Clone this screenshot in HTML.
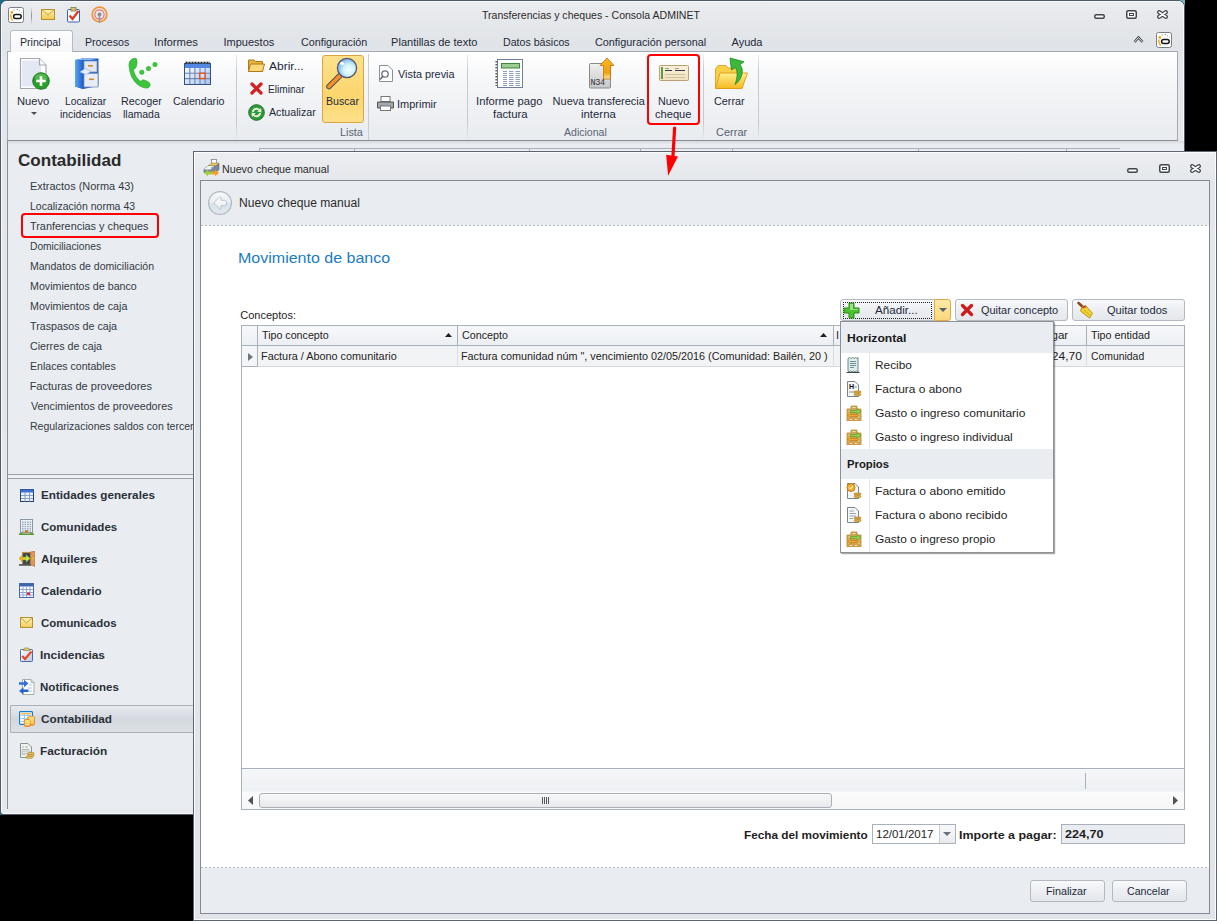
<!DOCTYPE html>
<html><head><meta charset="utf-8"><title>Nuevo cheque manual</title>
<style>
html,body{margin:0;padding:0;}
body{width:1217px;height:921px;overflow:hidden;position:relative;background:#000;font-family:"Liberation Sans",sans-serif;}
.a{position:absolute;box-sizing:border-box;}
.t{position:absolute;white-space:pre;transform-origin:0 0;font-family:"Liberation Sans",sans-serif;}
</style></head><body>
<div class="a" style="left:0px;top:0px;width:10px;height:10px;background:#1d6f86;"></div>
<div class="a" style="left:1176px;top:0px;width:9px;height:10px;background:#6fb6c8;"></div>
<div class="a" style="left:0px;top:806px;width:10px;height:9px;background:#1d6f86;"></div>
<div class="a" style="left:0px;top:0px;width:1185px;height:815px;border:1px solid #505a68;border-radius:7px 7px 4px 4px;background:linear-gradient(#eaecef,#e0e3e7 45px,#e3e6ea 60px,#e6e9ec);"></div>
<div class="a" style="left:1px;top:1px;width:1183px;height:813px;border:1px solid #f8f9fb;border-radius:6px 6px 3px 3px;"></div>
<div class="t" style="left:481.76px;top:10px;font-size:11px;line-height:11px;color:#2b2b2b;transform:scaleX(0.9572);">Transferencias y cheques - Consola ADMINET</div>
<svg class="a" style="left:1094px;top:14px;" width="11" height="5" viewBox="0 0 11 5"><rect x="0.75" y="0.75" width="9.5" height="3.5" rx="1.5" fill="#fff" stroke="#41464d" stroke-width="1.5"/></svg>
<svg class="a" style="left:1126px;top:10px;" width="11" height="9" viewBox="0 0 11 9"><rect x="0.75" y="0.75" width="9.5" height="7.5" rx="1.5" fill="#fff" stroke="#41464d" stroke-width="1.5"/><rect x="3.5" y="3.5" width="4" height="2" fill="#fff" stroke="#41464d" stroke-width="1"/></svg>
<svg class="a" style="left:1157px;top:10px;" width="11" height="9" viewBox="0 0 11 9"><path d="M2.2,2.2 L8.8,6.8 M8.8,2.2 L2.2,6.8" stroke="#41464d" stroke-width="4.2" stroke-linecap="round"/><path d="M2.2,2.2 L8.8,6.8 M8.8,2.2 L2.2,6.8" stroke="#fff" stroke-width="1.8" stroke-linecap="round"/></svg>
<svg class="a" style="left:8px;top:7px;" width="16" height="16" viewBox="0 0 16 16"><rect x="0.5" y="0.5" width="15" height="15" rx="2" fill="#fff" stroke="#7c7f84"/><circle cx="3.8" cy="5.4" r="1.3" fill="#f0a010"/><path d="M2.8,7.5 C2.6,10 3.2,12 4.6,13.6" stroke="#f2aa20" stroke-width="1.5" fill="none"/><rect x="5.6" y="7.6" width="7.6" height="4" rx="2" fill="none" stroke="#161616" stroke-width="1.5"/><circle cx="6.1" cy="3" r="0.6" fill="#777"/><circle cx="9.3" cy="2.4" r="0.6" fill="#777"/><circle cx="11.6" cy="3.7" r="0.5" fill="#888"/><circle cx="13.4" cy="5.4" r="0.45" fill="#999"/></svg>
<div class="a" style="left:31px;top:7px;width:1px;height:18px;background:linear-gradient(#e4e7eb,#8a9099,#e4e7eb);"></div>
<svg class="a" style="left:41px;top:9px;" width="14" height="11" viewBox="0 0 14 11"><defs><linearGradient id="mg" x1="0" y1="0" x2="0" y2="1"><stop offset="0" stop-color="#fff3b8"/><stop offset="1" stop-color="#f0c850"/></linearGradient></defs><rect x="0.5" y="0.5" width="13" height="10" fill="url(#mg)" stroke="#b8902a"/><path d="M0.5,0.5 L7,6 L13.5,0.5" fill="none" stroke="#c8a040"/></svg>
<svg class="a" style="left:66px;top:7px;" width="15" height="16" viewBox="0 0 15 16"><rect x="1.5" y="2.5" width="12" height="12.5" rx="1" fill="#f4f8ff" stroke="#3a62b0"/><rect x="5" y="0.5" width="5" height="3.5" fill="#d8c070" stroke="#8a7a40" stroke-width="0.8"/><path d="M3.5,8.5 L6.5,12 L12.5,4" stroke="#e03a20" stroke-width="2.2" fill="none"/></svg>
<svg class="a" style="left:91px;top:6px;" width="17" height="17" viewBox="0 0 17 17"><circle cx="8.5" cy="8.5" r="7.3" fill="none" stroke="#f5943a" stroke-width="1.8"/><circle cx="8.5" cy="8.5" r="4.6" fill="none" stroke="#e86a6a" stroke-width="1.1"/><circle cx="8.5" cy="8.5" r="2" fill="#888"/><rect x="7.7" y="9" width="1.6" height="8" fill="#9a9a9a"/></svg>
<div class="a" style="left:10px;top:30px;width:63px;height:22px;background:linear-gradient(#fdfdfe,#f6f7f9);border:1px solid #b5bcc5;border-bottom:none;border-radius:3px 3px 0 0;z-index:2;"></div>
<div class="t" style="left:20.16px;top:37px;font-size:11px;line-height:11px;color:#1e2a3a;transform:scaleX(0.9600);z-index:3;">Principal</div>
<div class="t" style="left:85.16px;top:37px;font-size:11px;line-height:11px;color:#1e2a3a;transform:scaleX(0.9636);z-index:3;">Procesos</div>
<div class="t" style="left:154.47px;top:37px;font-size:11px;line-height:11px;color:#1e2a3a;transform:scaleX(1.0272);z-index:3;">Informes</div>
<div class="t" style="left:223.50px;top:37px;font-size:11px;line-height:11px;color:#1e2a3a;z-index:3;">Impuestos</div>
<div class="t" style="left:300.51px;top:37px;font-size:11px;line-height:11px;color:#1e2a3a;transform:scaleX(0.9756);z-index:3;">Configuración</div>
<div class="t" style="left:391.12px;top:37px;font-size:11px;line-height:11px;color:#1e2a3a;z-index:3;">Plantillas de texto</div>
<div class="t" style="left:502.66px;top:37px;font-size:11px;line-height:11px;color:#1e2a3a;transform:scaleX(0.9650);z-index:3;">Datos básicos</div>
<div class="t" style="left:595.01px;top:37px;font-size:11px;line-height:11px;color:#1e2a3a;transform:scaleX(0.9832);z-index:3;">Configuración personal</div>
<div class="t" style="left:731.50px;top:37px;font-size:11px;line-height:11px;color:#1e2a3a;z-index:3;">Ayuda</div>
<svg class="a" style="left:1133px;top:35px;" width="11" height="9" viewBox="0 0 11 9"><path d="M1.5,7 L5.5,2.5 L9.5,7" fill="none" stroke="#3a3f46" stroke-width="2.6" stroke-linejoin="round"/><path d="M1.5,7 L5.5,2.5 L9.5,7" fill="none" stroke="#fff" stroke-width="0.9"/></svg>
<svg class="a" style="left:1156px;top:32px;" width="16" height="16" viewBox="0 0 16 16"><rect x="0.5" y="0.5" width="15" height="15" rx="2" fill="#fff" stroke="#7c7f84"/><circle cx="3.8" cy="5.4" r="1.3" fill="#f0a010"/><path d="M2.8,7.5 C2.6,10 3.2,12 4.6,13.6" stroke="#f2aa20" stroke-width="1.5" fill="none"/><rect x="5.6" y="7.6" width="7.6" height="4" rx="2" fill="none" stroke="#161616" stroke-width="1.5"/><circle cx="6.1" cy="3" r="0.6" fill="#777"/><circle cx="9.3" cy="2.4" r="0.6" fill="#777"/><circle cx="11.6" cy="3.7" r="0.5" fill="#888"/><circle cx="13.4" cy="5.4" r="0.45" fill="#999"/></svg>
<div class="a" style="left:7px;top:51px;width:1171px;height:90px;background:linear-gradient(#ffffff,#f5f6f8 35%,#e8ebef);border:1px solid #a3aab3;border-bottom:1px solid #878e97;z-index:1;"></div>
<div class="a" style="left:8px;top:141px;width:1176px;height:3px;background:linear-gradient(#d6dade,#e6e9ec);z-index:2;"></div>
<div class="a" style="left:236px;top:54px;width:1px;height:86px;background:linear-gradient(#eef0f3,#c5cad1 20%,#c5cad1 80%,#e8ebef);z-index:2;"></div>
<div class="a" style="left:368px;top:54px;width:1px;height:86px;background:#c8cdd4;z-index:2;"></div>
<div class="a" style="left:466.5px;top:54px;width:1px;height:86px;background:linear-gradient(#eef0f3,#c5cad1 20%,#c5cad1 80%,#e8ebef);z-index:2;"></div>
<div class="a" style="left:703px;top:54px;width:1px;height:86px;background:linear-gradient(#eef0f3,#c5cad1 20%,#c5cad1 80%,#e8ebef);z-index:2;"></div>
<div class="a" style="left:758px;top:54px;width:1px;height:86px;background:linear-gradient(#eef0f3,#c5cad1 20%,#c5cad1 80%,#e8ebef);z-index:2;"></div>
<svg class="a" style="left:19px;top:57px;z-index:3;" width="33" height="33" viewBox="0 0 33 33"><path d="M1.5,1.5 H20.5 L27,8 V31.5 H1.5 Z" fill="#fff" stroke="#a4a8ae" stroke-width="1.2"/><rect x="3" y="3.5" width="19" height="26" fill="#e4e8f4"/><path d="M20.5,1.5 V8 H27" fill="#fafafa" stroke="#a4a8ae" stroke-width="1.2"/><circle cx="22" cy="24" r="8.3" fill="#2a9e2a" stroke="#17731a" stroke-width="0.9"/><ellipse cx="22" cy="20.5" rx="6" ry="4" fill="#7fd47f" opacity="0.45"/><path d="M22,19.2 V28.8 M17.2,24 H26.8" stroke="#fff" stroke-width="2.6"/></svg>
<div class="t" style="left:16.61px;top:96px;font-size:11px;line-height:11px;color:#1e2a3a;transform:scaleX(1.0164);z-index:3;">Nuevo</div>
<svg class="a" style="left:31px;top:112px;z-index:3;" width="6" height="3" viewBox="0 0 6 3"><path d="M0,0 H6 L3,3 Z" fill="#4a4f57"/></svg>
<svg class="a" style="left:74px;top:57px;z-index:3;" width="26" height="33" viewBox="0 0 26 33"><defs><linearGradient id="cab" x1="0" y1="0" x2="1" y2="0"><stop offset="0" stop-color="#5aa8f4"/><stop offset="1" stop-color="#1f5fc8"/></linearGradient></defs><path d="M1,3 L9,1.5 H24.5 V29 L9,32 L1,29.5 Z" fill="#1e5ac4"/><path d="M1,3 L9,1.5 V32 L1,29.5 Z" fill="url(#cab)"/><path d="M1,3 L9,1.5 H24.5 L17,3 Z" fill="#7ab8f0"/><rect x="10" y="4" width="13" height="11" fill="#e2e8f3" stroke="#7f94b8" stroke-width="0.8"/><rect x="10" y="16.5" width="14" height="13.5" fill="#e8edf6" stroke="#7f94b8" stroke-width="0.8"/><rect x="14" y="8" width="5" height="1.6" fill="#d08a28"/><rect x="15" y="21.5" width="5" height="1.6" fill="#d08a28"/><path d="M6,15 L11,11.5 L17,14.5 L12,17.5 Z" fill="#e6eef8" stroke="#9ab0cc" stroke-width="0.6"/></svg>
<div class="t" style="left:64.88px;top:96px;font-size:11px;line-height:11px;color:#1e2a3a;transform:scaleX(0.9372);z-index:3;">Localizar</div>
<div class="t" style="left:60.30px;top:109px;font-size:11px;line-height:11px;color:#1e2a3a;transform:scaleX(0.9390);z-index:3;">incidencias</div>
<svg class="a" style="left:127px;top:57px;z-index:3;" width="31" height="33" viewBox="0 0 31 33"><path d="M2,8 C2,4 4.5,1.5 7.5,1.2 L9.5,1.8 C10.5,5 10.2,9 8.2,11.5 L6.5,12 C6.8,17 10,22 14,24.5 L15.5,22.8 C18.5,23.2 21,24.5 23,26.5 C23.6,29 22,31.5 18.5,31 C9,29.5 2.5,20 2,8 Z" fill="#3cc43c" stroke="#2ea82e" stroke-width="0.7"/><circle cx="14.8" cy="15.3" r="2.5" fill="#3cc43c"/><circle cx="21.5" cy="11.5" r="2.5" fill="#3cc43c"/><circle cx="28" cy="7.5" r="2.5" fill="#3cc43c"/></svg>
<div class="t" style="left:121.14px;top:96px;font-size:11px;line-height:11px;color:#1e2a3a;transform:scaleX(0.9802);z-index:3;">Recoger</div>
<div class="t" style="left:123.28px;top:109px;font-size:11px;line-height:11px;color:#1e2a3a;transform:scaleX(0.9536);z-index:3;">llamada</div>
<svg class="a" style="left:184px;top:61px;z-index:3;" width="27" height="24" viewBox="0 0 27 24"><defs><linearGradient id="calg" x1="0" y1="0" x2="1" y2="1"><stop offset="0" stop-color="#ffffff"/><stop offset="1" stop-color="#a8c4f0"/></linearGradient></defs><rect x="0.5" y="2.5" width="26" height="21" fill="url(#calg)" stroke="#34507c"/><rect x="1" y="3" width="25" height="4" fill="#5288e4"/><path d="M5.8,7 V23 M10.9,7 V23 M16,7 V23 M21.1,7 V23 M1,12.3 H26 M1,17.6 H26" stroke="#6e88b4" stroke-width="1.1"/><rect x="15.8" y="12.2" width="5.2" height="5.3" fill="#cfe6fa" stroke="#e8501a" stroke-width="1.4"/><path d="M1.5,1.5 H26" stroke="#1e1e1e" stroke-width="1.6" stroke-dasharray="2,1"/></svg>
<div class="t" style="left:173.02px;top:96px;font-size:11px;line-height:11px;color:#1e2a3a;transform:scaleX(0.9665);z-index:3;">Calendario</div>
<svg class="a" style="left:248px;top:58px;z-index:3;" width="17" height="14" viewBox="0 0 17 14"><path d="M0.5,2 H6 L7.5,3.5 H14.5 V13.5 H0.5 Z" fill="#e8b440" stroke="#b07818"/><path d="M2.5,6 H16.5 L14.5,13.5 H0.5 Z" fill="#f8d878" stroke="#b07818"/></svg>
<div class="t" style="left:268.50px;top:61px;font-size:11px;line-height:11px;color:#1e2a3a;transform:scaleX(1.0894);z-index:3;">Abrir...</div>
<svg class="a" style="left:250px;top:82px;z-index:3;" width="13" height="13" viewBox="0 0 13 13"><path d="M2,2 L11,11 M11,2 L2,11" stroke="#d42020" stroke-width="3.2" stroke-linecap="round"/></svg>
<div class="t" style="left:267.70px;top:84px;font-size:11px;line-height:11px;color:#1e2a3a;transform:scaleX(0.9191);z-index:3;">Eliminar</div>
<svg class="a" style="left:248px;top:104px;z-index:3;" width="17" height="17" viewBox="0 0 17 17"><circle cx="8.5" cy="8.5" r="7.8" fill="#2f9a3a" stroke="#1f6e28"/><path d="M4,8 A4.5,4.5 0 0 1 12,5.5 L13,3.5 L13.5,8.5 L9,7.5 L10.8,6.6 A3,3 0 0 0 5.8,8 Z M13,9 A4.5,4.5 0 0 1 5,11.5 L4,13.5 L3.5,8.5 L8,9.5 L6.2,10.4 A3,3 0 0 0 11.2,9 Z" fill="#e6f6d8"/></svg>
<div class="t" style="left:268.50px;top:107px;font-size:11px;line-height:11px;color:#1e2a3a;transform:scaleX(0.9662);z-index:3;">Actualizar</div>
<div class="a" style="left:322px;top:55px;width:42px;height:68px;background:linear-gradient(#fde28c,#fdd873 45%,#fcd66e 60%,#fde08a);border:1px solid #dca443;border-radius:3px;z-index:2;"></div>
<svg class="a" style="left:326px;top:57px;z-index:3;" width="33" height="33" viewBox="0 0 33 33"><defs><radialGradient id="lens" cx="0.6" cy="0.6" r="0.6"><stop offset="0" stop-color="#f4feff"/><stop offset="0.5" stop-color="#cdf2fa"/><stop offset="1" stop-color="#7fb0e6"/></radialGradient></defs><path d="M3,29.5 L13.5,19" stroke="#4a4a60" stroke-width="5.6" stroke-linecap="round"/><path d="M3,29.5 L13.5,19" stroke="#f39028" stroke-width="3.8" stroke-linecap="round"/><circle cx="21" cy="11" r="9.6" fill="url(#lens)" stroke="#55557a" stroke-width="1.3"/><ellipse cx="16" cy="6.5" rx="2" ry="1.4" fill="#fff"/></svg>
<div class="t" style="left:325.65px;top:96px;font-size:11px;line-height:11px;color:#1e2a3a;transform:scaleX(0.9660);z-index:3;">Buscar</div>
<div class="t" style="left:340.14px;top:127px;font-size:11px;line-height:11px;color:#5a6470;transform:scaleX(0.9832);z-index:3;">Lista</div>
<svg class="a" style="left:378px;top:65px;z-index:3;" width="16" height="17" viewBox="0 0 16 17"><path d="M1.5,0.5 H10 L14.5,5 V16.5 H1.5 Z" fill="#fff" stroke="#8a9099"/><circle cx="7" cy="9" r="3.2" fill="none" stroke="#6a7480" stroke-width="1.3"/><line x1="4.6" y1="11.6" x2="2" y2="14.5" stroke="#6a7480" stroke-width="1.6"/></svg>
<div class="t" style="left:398.00px;top:69px;font-size:11px;line-height:11px;color:#1e2a3a;transform:scaleX(0.9869);z-index:3;">Vista previa</div>
<svg class="a" style="left:377px;top:96px;z-index:3;" width="17" height="15" viewBox="0 0 17 15"><rect x="4" y="0.5" width="9" height="5" fill="#fff" stroke="#777"/><path d="M0.5,6 H16.5 V12 H0.5 Z" fill="#a0a8b0" stroke="#555"/><rect x="3.5" y="10" width="10" height="4.5" fill="#fff" stroke="#777"/></svg>
<div class="t" style="left:397.00px;top:99px;font-size:11px;line-height:11px;color:#1e2a3a;z-index:3;">Imprimir</div>
<svg class="a" style="left:494px;top:58px;z-index:3;" width="30" height="31" viewBox="0 0 30 31"><rect x="3.5" y="1.5" width="25" height="28" fill="#fff" stroke="#6e7f98"/><rect x="7.5" y="5.5" width="18" height="4.5" fill="#9ccc94" stroke="#3a8a3a"/><path d="M9,13.5 H13 M15,13.5 H19.5 M21.5,13.5 H26" stroke="#8aa0bc" stroke-width="1"/><path d="M9,15.5 H13 M15,15.5 H19.5 M21.5,15.5 H26" stroke="#8aa0bc" stroke-width="1"/><path d="M9,17.5 H13 M15,17.5 H19.5 M21.5,17.5 H26" stroke="#8aa0bc" stroke-width="1"/><path d="M9,19.5 H13 M15,19.5 H19.5 M21.5,19.5 H26" stroke="#8aa0bc" stroke-width="1"/><path d="M9,21.5 H13 M15,21.5 H19.5 M21.5,21.5 H26" stroke="#8aa0bc" stroke-width="1"/><path d="M9,23.5 H13 M15,23.5 H19.5 M21.5,23.5 H26" stroke="#8aa0bc" stroke-width="1"/><path d="M9,25.5 H13 M15,25.5 H19.5 M21.5,25.5 H26" stroke="#8aa0bc" stroke-width="1"/><path d="M9,27.5 H13 M15,27.5 H19.5 M21.5,27.5 H26" stroke="#8aa0bc" stroke-width="1"/><path d="M2.5,3 V28" stroke="#666" stroke-width="2.2" stroke-dasharray="1.4,1.6"/></svg>
<div class="t" style="left:476.47px;top:96px;font-size:11px;line-height:11px;color:#1e2a3a;transform:scaleX(1.0256);z-index:3;">Informe pago</div>
<div class="t" style="left:492.87px;top:109px;font-size:11px;line-height:11px;color:#1e2a3a;transform:scaleX(1.0299);z-index:3;">factura</div>
<svg class="a" style="left:588px;top:57px;z-index:3;" width="28" height="32" viewBox="0 0 28 32"><defs><linearGradient id="n34" x1="0" y1="0" x2="0" y2="1"><stop offset="0" stop-color="#f0f0f0"/><stop offset="1" stop-color="#c8c8c8"/></linearGradient><linearGradient id="arr" x1="0" y1="0" x2="0" y2="1"><stop offset="0" stop-color="#f8b820"/><stop offset="0.7" stop-color="#f0a010"/><stop offset="1" stop-color="#f8e8a0"/></linearGradient></defs><rect x="1.5" y="6.5" width="21" height="24.5" rx="1" fill="url(#n34)" stroke="#8a8a8a"/><text x="2.5" y="28" font-family="Liberation Mono" font-size="8.5" fill="#333" letter-spacing="-0.3">N34</text><path d="M19,1 L26,8.5 H22.5 V22 H15.5 V8.5 H12 Z" fill="url(#arr)" stroke="#c07010" stroke-width="0.8"/></svg>
<div class="t" style="left:552.62px;top:96px;font-size:11px;line-height:11px;color:#1e2a3a;z-index:3;">Nueva transferecia</div>
<div class="t" style="left:581.22px;top:109px;font-size:11px;line-height:11px;color:#1e2a3a;transform:scaleX(1.0342);z-index:3;">interna</div>
<div class="t" style="left:564.00px;top:127px;font-size:11px;line-height:11px;color:#5a6470;transform:scaleX(0.9573);z-index:3;">Adicional</div>
<svg class="a" style="left:659px;top:65px;z-index:3;" width="30" height="16" viewBox="0 0 30 16"><defs><linearGradient id="chq" x1="0" y1="0" x2="0" y2="1"><stop offset="0" stop-color="#fbf1da"/><stop offset="1" stop-color="#f2e2bc"/></linearGradient></defs><rect x="0.5" y="0.5" width="29" height="15" rx="1" fill="url(#chq)" stroke="#b8a070"/><rect x="2" y="2" width="2" height="12" fill="#5a9a4a"/><path d="M6,3.5 H10 M16,3.5 H20" stroke="#9a9488" stroke-width="0.9"/><path d="M6,5.5 H13 M16,5.5 H26" stroke="#3a3a4a" stroke-width="1.1"/><path d="M6,9.5 H26 M6,12.5 H26" stroke="#c8bca0" stroke-width="0.9"/></svg>
<div class="t" style="left:658.14px;top:96px;font-size:11px;line-height:11px;color:#1e2a3a;transform:scaleX(0.9836);z-index:3;">Nuevo</div>
<div class="t" style="left:655.49px;top:109px;font-size:11px;line-height:11px;color:#1e2a3a;transform:scaleX(1.0107);z-index:3;">cheque</div>
<div class="a" style="left:647px;top:54px;width:53px;height:71px;border:2px solid #ff0000;border-radius:4px;z-index:4;"></div>
<svg class="a" style="left:714px;top:57px;z-index:3;" width="34" height="33" viewBox="0 0 34 33"><defs><linearGradient id="fld" x1="0" y1="0" x2="0" y2="1"><stop offset="0" stop-color="#fff090"/><stop offset="1" stop-color="#f6b820"/></linearGradient></defs><path d="M1.5,12 L4,8.5 H12 L14,11 H28 V31.5 H1.5 Z" fill="#f8d048" stroke="#e0a020" stroke-width="0.9"/><path d="M6,16 H33.5 L28,31.5 H1.5 Z" fill="url(#fld)" stroke="#e09a18" stroke-width="0.9"/><path d="M16,1 L30,4.8 L26,7.5 C30,13.5 28.5,22 21,27.5 C24,20 23.5,13.5 21.5,10.5 L17.5,13 Z" fill="#3cb83c" stroke="#1e8a1e" stroke-width="0.8"/></svg>
<div class="t" style="left:714.01px;top:96px;font-size:11px;line-height:11px;color:#1e2a3a;transform:scaleX(0.9836);z-index:3;">Cerrar</div>
<div class="t" style="left:716.00px;top:127px;font-size:11px;line-height:11px;color:#5a6470;z-index:3;">Cerrar</div>
<svg class="a" style="left:660px;top:126px;z-index:20;" width="24" height="52" viewBox="0 0 24 52"><path d="M14.6,2 L13,30" stroke="#ff0000" stroke-width="3.2" stroke-linecap="round"/><path d="M6.2,28.8 L18,30.4 L8.1,49.7 Z" fill="#ff0000"/></svg>
<div class="a" style="left:7px;top:141px;width:187px;height:668px;background:#e9ecf0;border-left:1px solid #8a9099;"></div>
<div class="a" style="left:8px;top:141px;width:186px;height:3px;background:linear-gradient(#d4d8dd,#e9ecf0);"></div>
<div class="a" style="left:194px;top:141px;width:990px;height:667px;background:#e9ecf0;"></div>
<div class="a" style="left:259px;top:148px;width:861px;height:4px;background:linear-gradient(#eceef2,#e6e9ed);border:1px solid #a8b0ba;border-bottom:none;border-right:none;"></div>
<div class="a" style="left:354px;top:148px;width:1px;height:4px;background:#a8b0ba;"></div>
<div class="a" style="left:529px;top:148px;width:1px;height:4px;background:#a8b0ba;"></div>
<div class="a" style="left:640px;top:148px;width:1px;height:4px;background:#a8b0ba;"></div>
<div class="a" style="left:732px;top:148px;width:1px;height:4px;background:#a8b0ba;"></div>
<div class="a" style="left:918px;top:148px;width:1px;height:4px;background:#a8b0ba;"></div>
<div class="a" style="left:1066px;top:148px;width:1px;height:4px;background:#a8b0ba;"></div>
<div class="t" style="left:18.07px;top:152px;font-size:17px;line-height:17px;font-weight:700;color:#2a2a2a;transform:scaleX(1.0035);">Contabilidad</div>
<div class="t" style="left:29.63px;top:181px;font-size:11px;line-height:11px;color:#333a44;transform:scaleX(0.9951);">Extractos (Norma 43)</div>
<div class="t" style="left:29.66px;top:201px;font-size:11px;line-height:11px;color:#333a44;transform:scaleX(0.9545);">Localización norma 43</div>
<div class="t" style="left:30.25px;top:221px;font-size:11px;line-height:11px;color:#333a44;transform:scaleX(0.9876);">Tranferencias y cheques</div>
<div class="t" style="left:29.69px;top:241px;font-size:11px;line-height:11px;color:#333a44;transform:scaleX(0.9291);">Domiciliaciones</div>
<div class="t" style="left:29.66px;top:261px;font-size:11px;line-height:11px;color:#333a44;transform:scaleX(0.9570);">Mandatos de domiciliación</div>
<div class="t" style="left:29.65px;top:281px;font-size:11px;line-height:11px;color:#333a44;transform:scaleX(0.9701);">Movimientos de banco</div>
<div class="t" style="left:29.65px;top:301px;font-size:11px;line-height:11px;color:#333a44;transform:scaleX(0.9711);">Movimientos de caja</div>
<div class="t" style="left:30.26px;top:321px;font-size:11px;line-height:11px;color:#333a44;transform:scaleX(0.9725);">Traspasos de caja</div>
<div class="t" style="left:30.01px;top:341px;font-size:11px;line-height:11px;color:#333a44;transform:scaleX(0.9728);">Cierres de caja</div>
<div class="t" style="left:29.66px;top:361px;font-size:11px;line-height:11px;color:#333a44;transform:scaleX(0.9602);">Enlaces contables</div>
<div class="t" style="left:29.63px;top:381px;font-size:11px;line-height:11px;color:#333a44;">Facturas de proveedores</div>
<div class="t" style="left:30.50px;top:401px;font-size:11px;line-height:11px;color:#333a44;transform:scaleX(0.9765);">Vencimientos de proveedores</div>
<div class="a" style="left:30px;top:417px;width:163px;height:18px;overflow:hidden;"><div class="t" style="left:-0.4px;top:4px;font-size:11px;line-height:11px;color:#333a44;transform:scaleX(0.955);">Regularizaciones saldos con terceros</div></div>
<div class="a" style="left:21px;top:213px;width:138px;height:25px;border:2px solid #ff0000;border-radius:4px;z-index:5;"></div>
<div class="a" style="left:8px;top:474px;width:186px;height:5px;border-top:1px solid #9aa1aa;border-bottom:1px solid #9aa1aa;background:#eef0f3;"></div>
<div class="a" style="left:10px;top:705px;width:184px;height:28px;border:1px solid #a9b0b9;border-right:none;border-radius:2px 0 0 2px;background:linear-gradient(#e8ebef,#d3d8df 50%,#dde1e6);"></div>
<div class="t" style="left:41.40px;top:490px;font-size:11px;line-height:11px;font-weight:700;color:#2a3038;transform:scaleX(1.0648);">Entidades generales</div>
<div class="t" style="left:40.68px;top:522px;font-size:11px;line-height:11px;font-weight:700;color:#2a3038;transform:scaleX(1.0481);">Comunidades</div>
<div class="t" style="left:40.93px;top:554px;font-size:11px;line-height:11px;font-weight:700;color:#2a3038;transform:scaleX(1.0610);">Alquileres</div>
<div class="t" style="left:40.67px;top:586px;font-size:11px;line-height:11px;font-weight:700;color:#2a3038;transform:scaleX(1.0667);">Calendario</div>
<div class="t" style="left:40.68px;top:618px;font-size:11px;line-height:11px;font-weight:700;color:#2a3038;transform:scaleX(1.0383);">Comunicados</div>
<div class="t" style="left:40.39px;top:650px;font-size:11px;line-height:11px;font-weight:700;color:#2a3038;transform:scaleX(1.0843);">Incidencias</div>
<div class="t" style="left:40.41px;top:682px;font-size:11px;line-height:11px;font-weight:700;color:#2a3038;transform:scaleX(1.0486);">Notificaciones</div>
<div class="t" style="left:40.67px;top:714px;font-size:11px;line-height:11px;font-weight:700;color:#2a3038;transform:scaleX(1.0662);">Contabilidad</div>
<div class="t" style="left:40.39px;top:746px;font-size:11px;line-height:11px;font-weight:700;color:#2a3038;transform:scaleX(1.0776);">Facturación</div>
<svg class="a" style="left:20px;top:489px;" width="16" height="16" viewBox="0 0 16 16"><rect x="0.5" y="0.5" width="13" height="12" fill="#eaf0fa" stroke="#26406a"/><rect x="0.5" y="0.5" width="13" height="3" fill="#3f6fd0"/><path d="M1,6.5 H13 M1,9.5 H13 M5,3.5 V12.5 M9.5,3.5 V12.5" stroke="#8aa0c0"/></svg>
<svg class="a" style="left:19px;top:519px;" width="16" height="16" viewBox="0 0 16 16"><rect x="1.5" y="0.5" width="12" height="13" fill="#eef2f6" stroke="#8a96a4"/><rect x="3.0" y="2.5" width="1.6" height="1.4" fill="#98aac0"/><rect x="5.5" y="2.5" width="1.6" height="1.4" fill="#98aac0"/><rect x="8.0" y="2.5" width="1.6" height="1.4" fill="#98aac0"/><rect x="10.5" y="2.5" width="1.6" height="1.4" fill="#98aac0"/><rect x="3.0" y="4.7" width="1.6" height="1.4" fill="#98aac0"/><rect x="5.5" y="4.7" width="1.6" height="1.4" fill="#98aac0"/><rect x="8.0" y="4.7" width="1.6" height="1.4" fill="#98aac0"/><rect x="10.5" y="4.7" width="1.6" height="1.4" fill="#98aac0"/><rect x="3.0" y="6.9" width="1.6" height="1.4" fill="#98aac0"/><rect x="5.5" y="6.9" width="1.6" height="1.4" fill="#98aac0"/><rect x="8.0" y="6.9" width="1.6" height="1.4" fill="#98aac0"/><rect x="10.5" y="6.9" width="1.6" height="1.4" fill="#98aac0"/><rect x="3.0" y="9.100000000000001" width="1.6" height="1.4" fill="#98aac0"/><rect x="5.5" y="9.100000000000001" width="1.6" height="1.4" fill="#98aac0"/><rect x="8.0" y="9.100000000000001" width="1.6" height="1.4" fill="#98aac0"/><rect x="10.5" y="9.100000000000001" width="1.6" height="1.4" fill="#98aac0"/><rect x="3.0" y="11.3" width="1.6" height="1.4" fill="#98aac0"/><rect x="5.5" y="11.3" width="1.6" height="1.4" fill="#98aac0"/><rect x="8.0" y="11.3" width="1.6" height="1.4" fill="#98aac0"/><rect x="10.5" y="11.3" width="1.6" height="1.4" fill="#98aac0"/><rect x="6.3" y="11" width="2.4" height="3" fill="#c8782a"/><path d="M0,15.5 Q2.5,12 5,15.5 Z M10,15.5 Q12.5,12 15,15.5 Z" fill="#6aa83a"/><rect x="0" y="14.5" width="15" height="1.5" fill="#5a9a2a"/></svg>
<svg class="a" style="left:19px;top:551px;" width="16" height="16" viewBox="0 0 16 16"><defs><linearGradient id="alq" x1="0" y1="0" x2="1" y2="0"><stop offset="0" stop-color="#f2a020"/><stop offset="0.5" stop-color="#f6c020"/><stop offset="0.55" stop-color="#a8e040"/><stop offset="1" stop-color="#d8f060"/></linearGradient></defs><rect x="3.5" y="1.5" width="8" height="12" fill="#3c4256" stroke="#c08a48" stroke-width="1.2"/><path d="M11.5,1 L16,0 V15.5 L11.5,13.8 Z" fill="#d99a58" stroke="#a86a30" stroke-width="0.6"/><circle cx="14" cy="7.5" r="0.9" fill="#f4c420"/><rect x="0" y="13.2" width="12" height="1.5" fill="#454a52"/><path d="M0,7.5 L3.5,4 V6 H7 V3.5 L11,7.5 L7,11.5 V9 H3.5 V11 Z" fill="url(#alq)" stroke="#6a9a20" stroke-width="0.4"/></svg>
<svg class="a" style="left:19px;top:583px;" width="16" height="16" viewBox="0 0 16 16"><rect x="0.5" y="0.5" width="14" height="14" fill="#fff" stroke="#4a6aa8"/><rect x="0.5" y="0.5" width="14" height="3" fill="#3a66b0"/><path d="M1,6.5 H14 M1,9.5 H14 M1,12 H14 M4,4 V14 M7.5,4 V14 M11,4 V14" stroke="#8aa6d6"/><rect x="8" y="9.5" width="3" height="2.5" fill="#e03030"/></svg>
<svg class="a" style="left:19px;top:615px;" width="16" height="16" viewBox="0 0 16 16"><defs><linearGradient id="mg2" x1="0" y1="0" x2="0" y2="1"><stop offset="0" stop-color="#fff4c0"/><stop offset="1" stop-color="#f2cc58"/></linearGradient></defs><rect x="1.5" y="2.5" width="12" height="10" fill="url(#mg2)" stroke="#b8902a"/><path d="M1.5,2.5 L7.5,8 L13.5,2.5" fill="none" stroke="#c8a040"/></svg>
<svg class="a" style="left:19px;top:647px;" width="16" height="16" viewBox="0 0 16 16"><defs><linearGradient id="clb" x1="0" y1="0" x2="1" y2="1"><stop offset="0" stop-color="#ffffff"/><stop offset="1" stop-color="#b8c8ea"/></linearGradient></defs><rect x="1.5" y="2.5" width="12" height="12" rx="0.8" fill="url(#clb)" stroke="#4a6aa4"/><path d="M4.5,3.5 L5.5,1 H9.5 L10.5,3.5 Z" fill="#e2cc6a" stroke="#9a8838" stroke-width="0.7"/><path d="M3.2,9 L6,12 L12.5,4.5" stroke="#e64a24" stroke-width="2.2" fill="none"/></svg>
<svg class="a" style="left:19px;top:679px;" width="16" height="16" viewBox="0 0 16 16"><path d="M3.5,0.5 H12 L15,3.5 V15.5 H3.5 Z" fill="#fff" stroke="#a8acb0"/><path d="M12,0.5 V3.5 H15" fill="none" stroke="#a8acb0"/><path d="M10,6 H13 M9,9 H13 M10,12 H13" stroke="#a8c0e8" stroke-width="1.2"/><path d="M0,3.2 H5 V0.8 L9.5,4.5 L5,8.2 V5.8 H0 Z" fill="#2f6fdc"/><path d="M9.5,10.5 H4.5 V8.2 L0,12 L4.5,15.5 V13 H9.5 Z" fill="#2a62cc"/></svg>
<svg class="a" style="left:19px;top:711px;" width="16" height="16" viewBox="0 0 16 16"><defs><linearGradient id="coin" x1="0" y1="0" x2="0" y2="1"><stop offset="0" stop-color="#fff07a"/><stop offset="1" stop-color="#f4a83a"/></linearGradient></defs><rect x="0.6" y="0.6" width="12.8" height="12.8" rx="0.8" fill="#fff" stroke="#1a7ac8" stroke-width="1.2"/><path d="M2,2.8 H12" stroke="#f0b020" stroke-width="1.2"/><path d="M2,4.5 H12 M2,7.5 H9 M2,10.5 H6 M5.5,3 V12 M8.8,3 V9" stroke="#9ac4ec" stroke-width="0.9"/><rect x="9.3" y="5.3" width="6.2" height="9" rx="1.6" fill="url(#coin)" stroke="#e8862a" stroke-width="0.9"/><rect x="5.3" y="8.5" width="6.2" height="7" rx="1.6" fill="url(#coin)" stroke="#e8862a" stroke-width="0.9"/><path d="M10.5,9 H14.5 M10.5,11.5 H14.5 M6.5,11.5 H10.5 M6.5,13.5 H10.5" stroke="#f8e6a0" stroke-width="0.7"/></svg>
<svg class="a" style="left:19px;top:743px;" width="16" height="16" viewBox="0 0 16 16"><path d="M1.5,0.5 H9 L12.5,4 V14.5 H1.5 Z" fill="#eef2f0" stroke="#8a948e"/><path d="M3,4 H5 M6,4 H9 M3,6.5 H10 M3,9 H6 M3,11 H7" stroke="#a6b0aa" stroke-width="0.9"/><rect x="3" y="8" width="8" height="3" fill="#dde6e2" stroke="#a6b0aa" stroke-width="0.6"/><rect x="8.5" y="9.5" width="6.5" height="2" rx="1" fill="#e8c060" stroke="#a8802a" stroke-width="0.6"/><rect x="8.5" y="11.5" width="6.5" height="2" rx="1" fill="#e8c060" stroke="#a8802a" stroke-width="0.6"/><rect x="7" y="13.3" width="6.5" height="2" rx="1" fill="#e8c060" stroke="#a8802a" stroke-width="0.6"/></svg>
<div class="a" style="left:193px;top:151px;width:1024px;height:770px;border:1px solid #5c6570;background:linear-gradient(#eceef2,#e4e7eb 30px,#e1e4e9);z-index:10;"></div>
<div class="a" style="left:194px;top:152px;width:1022px;height:768px;border:1px solid #fbfcfd;z-index:10;"></div>
<svg class="a" style="left:203px;top:159px;z-index:11;" width="17" height="18" viewBox="0 0 17 18"><rect x="8.5" y="0.5" width="5" height="5" fill="#fff" stroke="#7a8490" stroke-width="0.8"/><path d="M5,7 L9,4 H16 L13,7.5 Z" fill="#e8c468" stroke="#a88830" stroke-width="0.6"/><path d="M1,10 L5,7 H13 L16,4.5 V10.5 L13,13.5 H1 Z" fill="#7c8896" stroke="#56606c" stroke-width="0.6"/><path d="M1,10 L5,7 H11 L7.5,10.5 H1 Z" fill="#eef1f4"/><path d="M8,9 L10,8 L11,9" stroke="#6a8" stroke-width="0.8" fill="none"/><path d="M1,14 L5,10.8 V12.5 H8.5 V15.5 H5 V17.2 Z" fill="#9ad23a"/><path d="M16,14 L12,10.8 V12.5 H8.5 V15.5 H12 V17.2 Z" fill="#f3a024"/></svg>
<div class="t" style="left:221.95px;top:164px;font-size:11px;line-height:11px;color:#2b2b2b;transform:scaleX(0.9724);z-index:11;">Nuevo cheque manual</div>
<svg class="a" style="left:1127px;top:168px;z-index:11;" width="11" height="5" viewBox="0 0 11 5"><rect x="0.75" y="0.75" width="9.5" height="3.5" rx="1.5" fill="#fff" stroke="#41464d" stroke-width="1.5"/></svg>
<svg class="a" style="left:1159px;top:164px;z-index:11;" width="11" height="9" viewBox="0 0 11 9"><rect x="0.75" y="0.75" width="9.5" height="7.5" rx="1.5" fill="#fff" stroke="#41464d" stroke-width="1.5"/><rect x="3.5" y="3.5" width="4" height="2" fill="#fff" stroke="#41464d" stroke-width="1"/></svg>
<svg class="a" style="left:1190px;top:164px;z-index:11;" width="11" height="9" viewBox="0 0 11 9"><path d="M2.2,2.2 L8.8,6.8 M8.8,2.2 L2.2,6.8" stroke="#41464d" stroke-width="4.2" stroke-linecap="round"/><path d="M2.2,2.2 L8.8,6.8 M8.8,2.2 L2.2,6.8" stroke="#fff" stroke-width="1.8" stroke-linecap="round"/></svg>
<div class="a" style="left:200px;top:180px;width:1010px;height:734px;border:1px solid #838a93;background:#fff;z-index:10;"></div>
<div class="a" style="left:201px;top:181px;width:1008px;height:45px;background:#e9ecf0;z-index:10;"></div>
<div class="a" style="left:201px;top:225px;width:1008px;height:1px;background:repeating-linear-gradient(90deg,#b4bac2 0 2px,#f4f5f7 2px 4px);z-index:10;"></div>
<div class="a" style="left:201px;top:867px;width:1008px;height:46px;background:#e9ecf0;z-index:10;"></div>
<div class="a" style="left:201px;top:867px;width:1008px;height:1px;background:repeating-linear-gradient(90deg,#b4bac2 0 2px,#f4f5f7 2px 4px);z-index:10;"></div>
<svg class="a" style="left:207px;top:190px;z-index:11;" width="26" height="26" viewBox="0 0 26 26"><defs><linearGradient id="bb" x1="0" y1="0" x2="0" y2="1"><stop offset="0" stop-color="#f7f8fa"/><stop offset="0.5" stop-color="#e9edf2"/><stop offset="0.52" stop-color="#d8e1eb"/><stop offset="1" stop-color="#e2e8ef"/></linearGradient><linearGradient id="ba" x1="0" y1="0" x2="0" y2="1"><stop offset="0" stop-color="#ffffff"/><stop offset="1" stop-color="#e6e9ee"/></linearGradient></defs><circle cx="13" cy="13" r="11.4" fill="url(#bb)" stroke="#b2b8c0" stroke-width="1.2"/><path d="M6.8,13 L12.3,7.2 Q13.6,6.2 14,7.6 V10.3 H17.6 Q19.6,10.3 19.6,13 Q19.6,15.7 17.6,15.7 H14 V18.6 Q13.6,20 12.3,18.9 Z" fill="url(#ba)" stroke="#b9c0c9" stroke-width="0.9"/></svg>
<div class="t" style="left:239.29px;top:197px;font-size:12px;line-height:12px;color:#2b2b2b;transform:scaleX(1.0072);z-index:11;">Nuevo cheque manual</div>
<div class="t" style="left:238.47px;top:250px;font-size:15px;line-height:15px;color:#1a7cc4;transform:scaleX(1.0671);z-index:11;">Movimiento de banco</div>
<div class="t" style="left:240.30px;top:310px;font-size:11px;line-height:11px;color:#1e1e1e;z-index:11;">Conceptos:</div>
<div class="a" style="left:241px;top:325px;width:944px;height:485px;border:1px solid #a9b1bb;background:#fff;z-index:11;"></div>
<div class="a" style="left:242px;top:326px;width:942px;height:20px;background:linear-gradient(#f7f8fa,#eceff3);border-bottom:1px solid #a9b1bb;z-index:11;"></div>
<div class="a" style="left:242px;top:346px;width:942px;height:21px;background:#f2f3f5;border-bottom:1px solid #d5d9de;z-index:11;"></div>
<div class="a" style="left:242px;top:346px;width:15px;height:21px;background:#f4f5f7;border-bottom:1px solid #a9b1bb;z-index:11;"></div>
<div class="a" style="left:257px;top:326px;width:1px;height:41px;background:#a9b1bb;z-index:12;"></div>
<div class="a" style="left:457px;top:326px;width:1px;height:19px;background:#a9b1bb;z-index:12;"></div>
<div class="a" style="left:833px;top:326px;width:1px;height:19px;background:#a9b1bb;z-index:12;"></div>
<div class="a" style="left:1086px;top:326px;width:1px;height:19px;background:#a9b1bb;z-index:12;"></div>
<div class="a" style="left:457px;top:346px;width:1px;height:20px;background:#d9dde2;z-index:12;"></div>
<div class="a" style="left:833px;top:346px;width:1px;height:20px;background:#d9dde2;z-index:12;"></div>
<div class="a" style="left:1086px;top:346px;width:1px;height:20px;background:#d9dde2;z-index:12;"></div>
<svg class="a" style="left:248px;top:353px;z-index:12;" width="5" height="8" viewBox="0 0 5 8"><path d="M0,0 L5,4 L0,8 Z" fill="#6d747c"/></svg>
<div class="t" style="left:261.76px;top:330px;font-size:11px;line-height:11px;color:#1e1e1e;transform:scaleX(0.9706);z-index:12;">Tipo concepto</div>
<svg class="a" style="left:445px;top:333px;z-index:12;" width="7" height="4" viewBox="0 0 7 4"><path d="M0,4 L3.5,0 L7,4 Z" fill="#1e1e1e"/></svg>
<div class="t" style="left:461.51px;top:330px;font-size:11px;line-height:11px;color:#1e1e1e;transform:scaleX(0.9756);z-index:12;">Concepto</div>
<svg class="a" style="left:820px;top:333px;z-index:12;" width="7" height="4" viewBox="0 0 7 4"><path d="M0,4 L3.5,0 L7,4 Z" fill="#1e1e1e"/></svg>
<div class="t" style="left:836.00px;top:330px;font-size:11px;line-height:11px;color:#1e1e1e;z-index:12;">I</div>
<div class="t" style="left:1029.47px;top:330px;font-size:11px;line-height:11px;color:#1e1e1e;transform:scaleX(1.0512);z-index:12;">a pagar</div>
<div class="t" style="left:1090.76px;top:330px;font-size:11px;line-height:11px;color:#1e1e1e;transform:scaleX(0.9789);z-index:12;">Tipo entidad</div>
<div class="t" style="left:261.14px;top:351px;font-size:11px;line-height:11px;color:#1e1e1e;transform:scaleX(0.9863);z-index:12;">Factura / Abono comunitario</div>
<div class="t" style="left:461.14px;top:351px;font-size:11px;line-height:11px;color:#1e1e1e;transform:scaleX(0.9822);z-index:12;">Factura comunidad núm &quot;, vencimiento 02/05/2016 (Comunidad: Bailén, 20 )</div>
<div class="t" style="left:1045.45px;top:351px;font-size:11px;line-height:11px;color:#1e1e1e;transform:scaleX(1.0992);z-index:12;">224,70</div>
<div class="t" style="left:1090.53px;top:351px;font-size:11px;line-height:11px;color:#1e1e1e;transform:scaleX(0.9455);z-index:12;">Comunidad</div>
<div class="a" style="left:242px;top:768px;width:942px;height:41px;border-top:1px solid #a9b1bb;background:linear-gradient(#f5f6f8,#eef1f4 55%,#fbfbfc 58%,#f7f7f8);z-index:11;"></div>
<div class="a" style="left:1085px;top:773px;width:1px;height:16px;background:#a9b1bb;z-index:12;"></div>
<svg class="a" style="left:248px;top:796px;z-index:12;" width="5" height="9" viewBox="0 0 5 9"><path d="M5,0 L0,4.5 L5,9 Z" fill="#4e5358"/></svg>
<svg class="a" style="left:1173px;top:796px;z-index:12;" width="5" height="9" viewBox="0 0 5 9"><path d="M0,0 L5,4.5 L0,9 Z" fill="#4e5358"/></svg>
<div class="a" style="left:259px;top:793px;width:573px;height:15px;border:1px solid #a9b0b8;border-radius:3px;background:linear-gradient(#f7f8f9,#e8e9eb);z-index:12;"></div>
<svg class="a" style="left:542px;top:797px;z-index:13;" width="7" height="7" viewBox="0 0 7 7"><path d="M0.5,0 V7 M2.5,0 V7 M4.5,0 V7 M6.5,0 V7" stroke="#55595e" stroke-width="1"/></svg>
<div class="a" style="left:840px;top:299px;width:95px;height:22px;border:1px solid #b3b9c1;border-radius:3px;background:linear-gradient(#f8f9fb,#eceef2 50%,#e4e7eb);z-index:11;border-radius:3px 0 0 3px;"></div>
<div class="a" style="left:934px;top:299px;width:17px;height:22px;border:1px solid #e0a84c;border-radius:0 3px 3px 0;background:linear-gradient(#fde9a6,#fbd77a);z-index:12;"></div>
<svg class="a" style="left:939px;top:308px;z-index:13;" width="8" height="4" viewBox="0 0 8 4"><path d="M0,0 H8 L4,4 Z" fill="#566070"/></svg>
<div class="a" style="left:843px;top:302px;width:89px;height:17px;border:1px dotted #222;z-index:12;"></div>
<svg class="a" style="left:843px;top:302px;z-index:13;" width="18" height="17" viewBox="0 0 18 17"><path d="M6,1 H11 V6 H16 V11 H11 V16 H6 V11 H1 V6 H6 Z" fill="#4cc030" stroke="#2a8a1a"/><path d="M7,2 H10 V7 H15 V8 H7 Z" fill="#9be080"/></svg>
<div class="t" style="left:874.80px;top:305px;font-size:11px;line-height:11px;color:#1e2a3a;transform:scaleX(1.0590);z-index:13;">Añadir...</div>
<div class="a" style="left:955px;top:299px;width:113px;height:22px;border:1px solid #b3b9c1;border-radius:3px;background:linear-gradient(#f8f9fb,#eceef2 50%,#e4e7eb);z-index:11;"></div>
<svg class="a" style="left:960px;top:303px;z-index:13;" width="14" height="14" viewBox="0 0 14 14"><path d="M2.5,2.5 L11.5,11.5 M11.5,2.5 L2.5,11.5" stroke="#c81e1e" stroke-width="3.4" stroke-linecap="round"/></svg>
<div class="t" style="left:981.20px;top:305px;font-size:11px;line-height:11px;color:#1e2a3a;transform:scaleX(0.9941);z-index:13;">Quitar concepto</div>
<div class="a" style="left:1072px;top:299px;width:113px;height:22px;border:1px solid #b3b9c1;border-radius:3px;background:linear-gradient(#f8f9fb,#eceef2 50%,#e4e7eb);z-index:11;"></div>
<svg class="a" style="left:1076px;top:301px;z-index:13;" width="18" height="18" viewBox="0 0 18 18"><path d="M2.5,2 L7.5,6.5" stroke="#8a4a1c" stroke-width="2.6" stroke-linecap="round"/><path d="M6,6 L9.5,4.5 L16.5,12.5 L13.5,17 L4.5,10 Z" fill="#f2d232" stroke="#b08a10" stroke-width="0.9"/><path d="M6.5,6.8 L9.8,5.4" stroke="#c8302a" stroke-width="1.6"/><path d="M8,9 L14,14.5" stroke="#c8a020" stroke-width="0.8"/></svg>
<div class="t" style="left:1107.10px;top:305px;font-size:11px;line-height:11px;color:#1e2a3a;transform:scaleX(1.0068);z-index:13;">Quitar todos</div>
<div class="t" style="left:743.70px;top:830px;font-size:11px;line-height:11px;font-weight:700;color:#1e1e1e;transform:scaleX(1.0710);z-index:11;">Fecha del movimiento</div>
<div class="a" style="left:872px;top:824px;width:84px;height:20px;border:1px solid #a9b1bb;background:#fff;z-index:11;"></div>
<div class="a" style="left:939px;top:825px;width:16px;height:18px;border-left:1px solid #c8ced5;background:linear-gradient(#f8f9fa,#e8eaed);z-index:12;"></div>
<svg class="a" style="left:943px;top:832px;z-index:13;" width="8" height="4" viewBox="0 0 8 4"><path d="M0,0 H8 L4,4 Z" fill="#6a7078"/></svg>
<div class="t" style="left:875.59px;top:829px;font-size:11px;line-height:11px;color:#1e1e1e;transform:scaleX(1.0443);z-index:12;">12/01/2017</div>
<div class="t" style="left:959.35px;top:830px;font-size:11px;line-height:11px;font-weight:700;color:#1e1e1e;transform:scaleX(1.1319);z-index:11;">Importe a pagar:</div>
<div class="a" style="left:1061px;top:824px;width:124px;height:20px;border:1px solid #a9b1bb;background:#e9ecf0;z-index:11;"></div>
<div class="t" style="left:1064.57px;top:829px;font-size:11px;line-height:11px;font-weight:700;color:#1e1e1e;transform:scaleX(1.1437);z-index:12;">224,70</div>
<div class="a" style="left:1030px;top:880px;width:75px;height:22px;border:1px solid #b3b9c1;border-radius:3px;background:linear-gradient(#f8f9fb,#eceef2 50%,#e4e7eb);z-index:11;"></div>
<div class="t" style="left:1045.84px;top:886px;font-size:11px;line-height:11px;color:#1e2a3a;transform:scaleX(0.9778);z-index:12;">Finalizar</div>
<div class="a" style="left:1112px;top:880px;width:75px;height:22px;border:1px solid #b3b9c1;border-radius:3px;background:linear-gradient(#f8f9fb,#eceef2 50%,#e4e7eb);z-index:11;"></div>
<div class="t" style="left:1126.72px;top:886px;font-size:11px;line-height:11px;color:#1e2a3a;transform:scaleX(0.9683);z-index:12;">Cancelar</div>
<div class="a" style="left:842px;top:323px;width:214px;height:232px;background:rgba(0,0,0,0.07);border-radius:2px;z-index:30;"></div>
<div class="a" style="left:841px;top:322px;width:214px;height:232px;background:rgba(0,0,0,0.30);z-index:30;"></div>
<div class="a" style="left:840px;top:321px;width:214px;height:232px;border:1px solid #8d9196;background:#fff;z-index:31;"></div>
<div class="a" style="left:841px;top:322px;width:212px;height:31px;background:#e9ecf0;z-index:32;"></div>
<div class="a" style="left:841px;top:449px;width:212px;height:30px;background:#e9ecf0;z-index:32;"></div>
<div class="a" style="left:869px;top:353px;width:1px;height:96px;background:#e2e5e9;z-index:32;"></div>
<div class="a" style="left:869px;top:479px;width:1px;height:73px;background:#e2e5e9;z-index:32;"></div>
<div class="t" style="left:847.37px;top:333px;font-size:11px;line-height:11px;font-weight:700;color:#1a1a1a;transform:scaleX(1.1062);z-index:33;">Horizontal</div>
<div class="t" style="left:847.43px;top:459px;font-size:11px;line-height:11px;font-weight:700;color:#1a1a1a;transform:scaleX(1.0264);z-index:33;">Propios</div>
<div class="t" style="left:874.66px;top:360px;font-size:11px;line-height:11px;color:#1e1e1e;transform:scaleX(1.0768);z-index:33;">Recibo</div>
<div class="t" style="left:874.65px;top:384px;font-size:11px;line-height:11px;color:#1e1e1e;transform:scaleX(1.0844);z-index:33;">Factura o abono</div>
<div class="t" style="left:875.05px;top:408px;font-size:11px;line-height:11px;color:#1e1e1e;transform:scaleX(1.0935);z-index:33;">Gasto o ingreso comunitario</div>
<div class="t" style="left:875.06px;top:432px;font-size:11px;line-height:11px;color:#1e1e1e;transform:scaleX(1.0879);z-index:33;">Gasto o ingreso individual</div>
<div class="t" style="left:874.64px;top:486px;font-size:11px;line-height:11px;color:#1e1e1e;transform:scaleX(1.0994);z-index:33;">Factura o abono emitido</div>
<div class="t" style="left:874.65px;top:510px;font-size:11px;line-height:11px;color:#1e1e1e;transform:scaleX(1.0874);z-index:33;">Factura o abono recibido</div>
<div class="t" style="left:875.06px;top:534px;font-size:11px;line-height:11px;color:#1e1e1e;transform:scaleX(1.0818);z-index:33;">Gasto o ingreso propio</div>
<svg class="a" style="left:846px;top:357px;z-index:33;" width="16" height="16" viewBox="0 0 16 16"><path d="M2,1.5 L3.5,0.5 L5,1.5 L6.5,0.5 L8,1.5 L9.5,0.5 L11,1.5 L12,0.5 V15 L10.5,14 L9,15 L7.5,14 L6,15 L4.5,14 L3,15 L2,14 Z" fill="#dfeceb" stroke="#5e7c7a" stroke-width="0.9"/><path d="M4,4.5 H10 M4,6.5 H10 M4,8.5 H10 M4,10.5 H8" stroke="#6f8f98" stroke-width="1.1"/><path d="M0.5,15.5 H13.5" stroke="#3a4a48" stroke-width="1"/></svg>
<svg class="a" style="left:846px;top:381px;z-index:33;" width="16" height="16" viewBox="0 0 16 16"><path d="M1.5,0.5 H9 L12.5,4 V15.5 H1.5 Z" fill="#f4f6f8" stroke="#7a828c"/><text x="3" y="8" font-family="Liberation Sans" font-weight="700" font-size="7" fill="#111">H</text><path d="M8,6 H11 M3,11 H8" stroke="#8a96a4"/><rect x="8" y="10" width="7" height="2" rx="1" fill="#d8a838" stroke="#a87818" stroke-width="0.5"/><rect x="8" y="12.5" width="7" height="2" rx="1" fill="#d8a838" stroke="#a87818" stroke-width="0.5"/></svg>
<svg class="a" style="left:846px;top:405px;z-index:33;" width="16" height="16" viewBox="0 0 16 16"><path d="M1,4 H5 V1 H11 V4 H15 V16 H1 Z" fill="#d2a550" stroke="#b88a38" stroke-width="0.8"/><path d="M2.5,6 h1.5 M2.5,9 h1.5 M2.5,12 h1.5 M12,6 h1.5 M12,9 h1.5 M12,12 h1.5 M4,14.5 h2 M9,14.5 h2 M6.5,2.5 h3" stroke="#f3e2b8" stroke-width="1.2"/><path d="M4.5,5.5 H11 V3.5 L15,6.5 L11,9.5 V7.5 H4.5 Z" fill="#8fd24a" stroke="#5a9a28" stroke-width="0.6"/><path d="M12,9.5 H5 V7.8 L1.5,10.5 L5,13.2 V11.5 H12 Z" fill="#f0a830" stroke="#b87a18" stroke-width="0.6"/></svg>
<svg class="a" style="left:846px;top:429px;z-index:33;" width="16" height="16" viewBox="0 0 16 16"><path d="M1,4 H5 V1 H11 V4 H15 V16 H1 Z" fill="#d2a550" stroke="#b88a38" stroke-width="0.8"/><path d="M2.5,6 h1.5 M2.5,9 h1.5 M2.5,12 h1.5 M12,6 h1.5 M12,9 h1.5 M12,12 h1.5 M4,14.5 h2 M9,14.5 h2 M6.5,2.5 h3" stroke="#f3e2b8" stroke-width="1.2"/><path d="M4.5,5.5 H11 V3.5 L15,6.5 L11,9.5 V7.5 H4.5 Z" fill="#8fd24a" stroke="#5a9a28" stroke-width="0.6"/><path d="M12,9.5 H5 V7.8 L1.5,10.5 L5,13.2 V11.5 H12 Z" fill="#f0a830" stroke="#b87a18" stroke-width="0.6"/></svg>
<svg class="a" style="left:846px;top:483px;z-index:33;" width="16" height="16" viewBox="0 0 16 16"><path d="M1.5,0.5 H9 L12.5,4 V15.5 H1.5 Z" fill="#f4f6f8" stroke="#7a828c"/><circle cx="5" cy="4.5" r="4" fill="#f0b030" stroke="#c08010"/><path d="M3,4.5 L4.5,6 L7,3" stroke="#fff" fill="none"/><rect x="8" y="10" width="7" height="2" rx="1" fill="#d8a838" stroke="#a87818" stroke-width="0.5"/><rect x="8" y="12.5" width="7" height="2" rx="1" fill="#d8a838" stroke="#a87818" stroke-width="0.5"/></svg>
<svg class="a" style="left:846px;top:507px;z-index:33;" width="16" height="16" viewBox="0 0 16 16"><path d="M1.5,0.5 H9 L12.5,4 V15.5 H1.5 Z" fill="#f4f6f8" stroke="#7a828c"/><path d="M3.5,4 H8 M3.5,6.5 H10 M3.5,9 H10 M3.5,11.5 H7" stroke="#9aa4b0"/><rect x="8" y="10" width="7" height="2" rx="1" fill="#d8a838" stroke="#a87818" stroke-width="0.5"/><rect x="8" y="12.5" width="7" height="2" rx="1" fill="#d8a838" stroke="#a87818" stroke-width="0.5"/></svg>
<svg class="a" style="left:846px;top:531px;z-index:33;" width="16" height="16" viewBox="0 0 16 16"><path d="M1,4 H5 V1 H11 V4 H15 V16 H1 Z" fill="#d2a550" stroke="#b88a38" stroke-width="0.8"/><path d="M2.5,6 h1.5 M2.5,9 h1.5 M2.5,12 h1.5 M12,6 h1.5 M12,9 h1.5 M12,12 h1.5 M4,14.5 h2 M9,14.5 h2 M6.5,2.5 h3" stroke="#f3e2b8" stroke-width="1.2"/><path d="M4.5,5.5 H11 V3.5 L15,6.5 L11,9.5 V7.5 H4.5 Z" fill="#8fd24a" stroke="#5a9a28" stroke-width="0.6"/><path d="M12,9.5 H5 V7.8 L1.5,10.5 L5,13.2 V11.5 H12 Z" fill="#f0a830" stroke="#b87a18" stroke-width="0.6"/></svg>
</body></html>
